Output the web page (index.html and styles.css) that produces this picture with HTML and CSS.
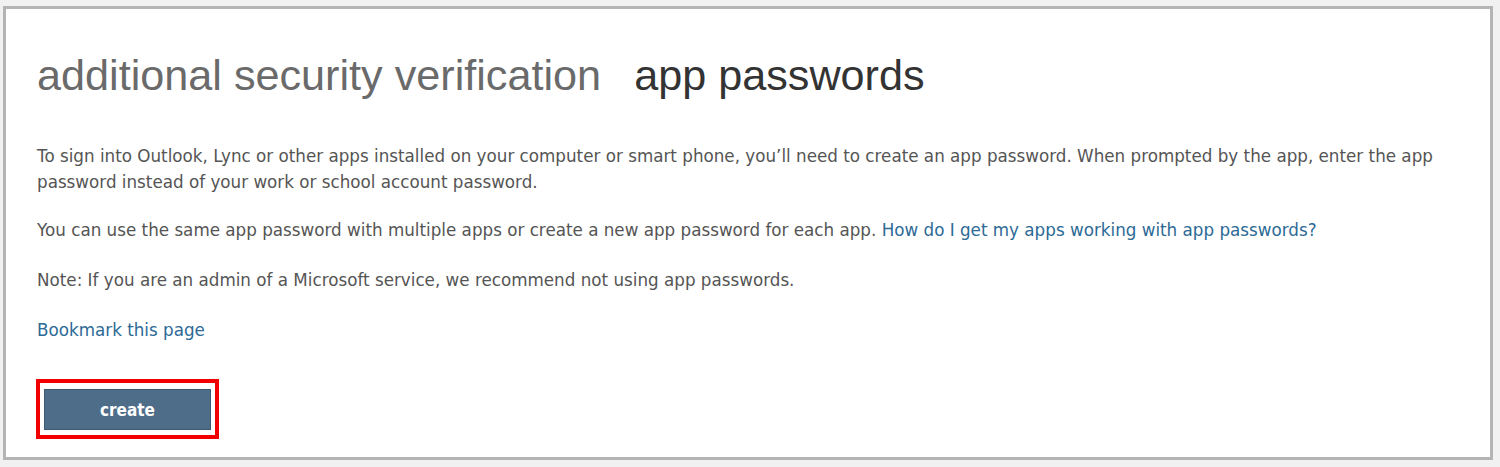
FILE: index.html
```html
<!DOCTYPE html>
<html>
<head>
<meta charset="utf-8">
<link rel="stylesheet" href="styles.css">
</head>
<body>
<div class="frame">
  <div class="panel">
    <h1 class="title"><span class="muted">additional security verification</span><span class="current">app passwords</span></h1>
    <p class="text">To sign into Outlook, Lync or other apps installed on your computer or smart phone, you’ll need to create an app password. When prompted by the app, enter the app password instead of your work or school account password.</p>
    <p class="text">You can use the same app password with multiple apps or create a new app password for each app. <a class="link" href="#">How do I get my apps working with app passwords?</a></p>
    <p class="text">Note: If you are an admin of a Microsoft service, we recommend not using app passwords.</p>
    <p class="text bookmark"><a class="link" href="#">Bookmark this page</a></p>
    <div class="highlight"><button class="btn">create</button></div>
  </div>
</div>
</body>
</html>
```

FILE: styles.css
```css
html, body { margin: 0; padding: 0; background: #f1f1f1; }
body { width: 1500px; height: 467px; overflow: hidden; }
.frame {
  margin: 6px 7px 0 3px;
  border: 3px solid #b4b4b4;
  background: #fff;
  height: 454px;
  box-sizing: border-box;
}
.panel { padding: 0 0 0 31px; }
.title {
  margin: 0;
  padding-top: 38px;
  font-family: "Liberation Sans", Arial, sans-serif;
  font-weight: normal;
  font-size: 43.2px;
  line-height: 56px;
  display: flex;
  gap: 33px;
}
.muted { color: #6a6a6a; }
.current { color: #333; }
.text {
  margin: 0;
  font-family: "DejaVu Sans", Verdana, sans-serif;
  font-size: 16.75px;
  line-height: 26px;
  color: #555;
  padding-right: 40px;
}
.title + .text { margin-top: 40px; }
.text + .text { margin-top: 22px; }
.text + .text + .text { margin-top: 24px; }
.text.bookmark { margin-top: 23px; }
.link { color: #2d6a96; text-decoration: none; }
.highlight {
  margin-top: 36px;
  margin-left: -1px;
  width: 183px;
  height: 60px;
  box-sizing: border-box;
  border: 4px solid #f20000;
  padding: 6px 4px 5px 4px;
}
.btn {
  display: block;
  width: 100%;
  height: 100%;
  background: #4e6d89;
  border: 1px solid #3d5a74;
  color: #fff;
  font-family: "DejaVu Sans Condensed", "DejaVu Sans", sans-serif;
  font-size: 17px;
  font-weight: bold;
  padding: 0;
}
```
